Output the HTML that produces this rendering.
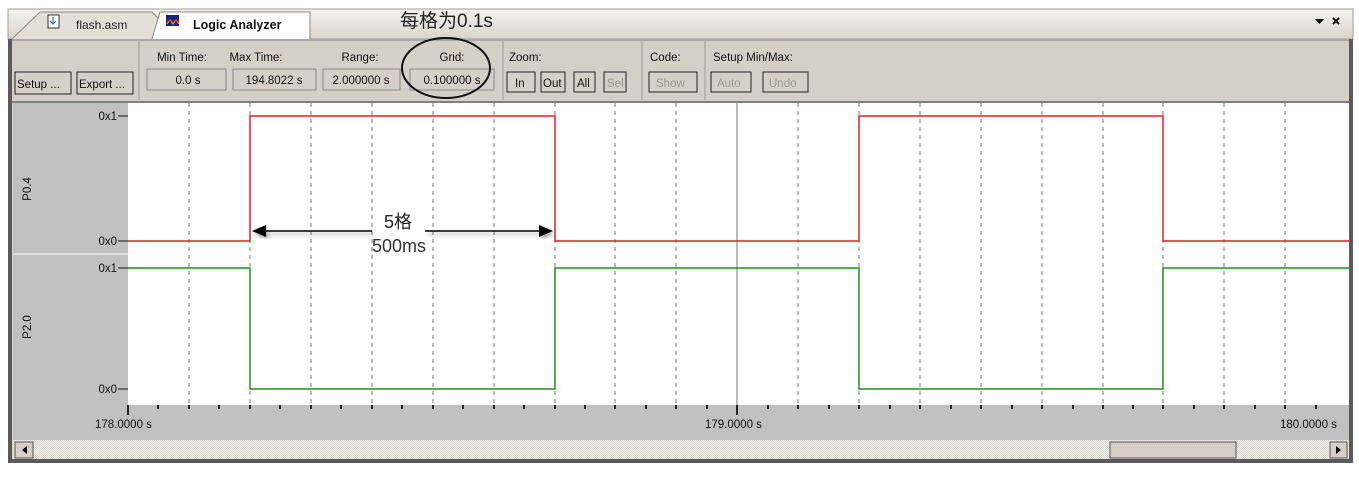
<!DOCTYPE html>
<html><head><meta charset="utf-8"><style>
body{margin:0;width:1359px;height:474px;overflow:hidden;background:#fff;font-family:"Liberation Sans","Noto Sans CJK SC",sans-serif}
svg text{font-family:"Liberation Sans","Noto Sans CJK SC",sans-serif}
</style></head><body>
<svg width="1359" height="474" viewBox="0 0 1359 474" xmlns="http://www.w3.org/2000/svg">
<defs>
<linearGradient id="tb" x1="0" y1="0" x2="0" y2="1"><stop offset="0" stop-color="#f4f3ee"/><stop offset="1" stop-color="#d8d5cc"/></linearGradient>
<pattern id="sc" width="2" height="2" patternUnits="userSpaceOnUse"><rect width="2" height="2" fill="#f2f0ea"/><rect width="1" height="1" fill="#dcd8cf"/><rect x="1" y="1" width="1" height="1" fill="#dcd8cf"/></pattern>
<filter id="sh"><feDropShadow dx="2" dy="3" stdDeviation="2" flood-opacity="0.35"/></filter>
</defs>
<!-- tab bar -->
<rect x="8" y="9" width="1345" height="30" fill="url(#tb)" stroke="#a09c94"/>
<path d="M12 39 L40 12 L152 12 L160 20 L160 39" fill="#e2dfd7" stroke="#8a877f"/>
<rect x="48" y="15" width="11" height="13" fill="#fff" stroke="#333"/>
<path d="M53 17 v6 M50 21 l3 3 l3-3" stroke="#1060c0" fill="none"/>
<text x="76" y="29" font-size="12" fill="#222">flash.asm</text>
<path d="M152 39 L160 12 L310 12 L310 39" fill="#fff" stroke="#8a877f"/>
<rect x="166" y="15" width="13" height="11" fill="#202080"/>
<path d="M167 24 l3-4 l3 4 l3-4 l3 4" stroke="#f0c000" fill="none"/><path d="M167 21 h12" stroke="#e02020"/>
<text x="193" y="29" font-size="12.5" font-weight="bold" fill="#111">Logic Analyzer</text>
<text x="400" y="27" font-size="19" fill="#222">每格为0.1s</text>
<path d="M1315 19 h9 l-4.5 5z" fill="#111"/>
<path d="M1333 18 l6 6 M1339 18 l-6 6" stroke="#111" stroke-width="2"/>
<!-- window frame -->
<rect x="8" y="39" width="1345" height="424" fill="#d4d0c8"/>
<rect x="8" y="39" width="4" height="424" fill="#5a5a5a"/>
<rect x="1349" y="39" width="4" height="424" fill="#5a5a5a"/>
<rect x="8" y="459" width="1345" height="4" fill="#5a5a5a"/>
<line x1="12" y1="40" x2="1349" y2="40" stroke="#808080"/>
<!-- toolbar separators -->
<g stroke="#a09c94"><line x1="139" y1="41" x2="139" y2="100"/><line x1="503" y1="41" x2="503" y2="100"/><line x1="642" y1="41" x2="642" y2="100"/><line x1="705" y1="41" x2="705" y2="100"/></g>
<g font-size="11.5" fill="#111" text-anchor="middle">
<text x="182" y="61">Min Time:</text><text x="256" y="61">Max Time:</text><text x="360" y="61">Range:</text><text x="452" y="61">Grid:</text>
</g>
<g font-size="11.5" fill="#111"><text x="509" y="61">Zoom:</text><text x="650" y="61">Code:</text><text x="713" y="61">Setup Min/Max:</text></g>
<!-- value boxes -->
<g fill="#d4d0c8" stroke="#888"><rect x="147" y="69" width="79" height="21"/><rect x="233" y="69" width="83" height="21"/><rect x="323" y="69" width="77" height="21"/><rect x="410" y="69" width="84" height="21"/></g>
<g font-size="11.5" fill="#111" text-anchor="middle"><text x="188" y="84">0.0 s</text><text x="274" y="84">194.8022 s</text><text x="361" y="84">2.000000 s</text><text x="452" y="84">0.100000 s</text></g>
<!-- buttons -->
<g fill="#d4d0c8" stroke="#222">
<rect x="15" y="72" width="56" height="22"/><rect x="77" y="72" width="56" height="22"/>
<rect x="507" y="72" width="28" height="20"/><rect x="541" y="72" width="24" height="20"/><rect x="574" y="72" width="21" height="20"/><rect x="604" y="72" width="22" height="20"/>
<rect x="649" y="72" width="48" height="20"/><rect x="711" y="72" width="40" height="20"/><rect x="763" y="72" width="45" height="20"/>
</g>
<g font-size="11.5" fill="#111"><text x="17" y="88">Setup ...</text><text x="79" y="88">Export ...</text><text x="515" y="87">In</text><text x="543" y="87">Out</text><text x="577" y="87">All</text></g>
<g font-size="11.5" fill="#9a978f"><text x="607" y="87">Sel</text><text x="656" y="87">Show</text><text x="717" y="87">Auto</text><text x="769" y="87">Undo</text></g>
<ellipse cx="446" cy="68" rx="44" ry="30" fill="none" stroke="#111" stroke-width="2"/>
<!-- plot area -->
<rect x="12" y="101" width="1337" height="2" fill="#808080"/>
<rect x="13" y="103" width="115" height="302" fill="#c0c0c0"/>
<rect x="128" y="103" width="1221" height="302" fill="#fff"/>
<line x1="13" y1="254" x2="128" y2="254" stroke="#fff"/>
<rect x="13" y="405" width="1336" height="35" fill="#c0c0c0"/>
<g stroke="#777" stroke-dasharray="4,4">
<line x1="189" y1="103" x2="189" y2="405"/><line x1="250" y1="103" x2="250" y2="405"/><line x1="311" y1="103" x2="311" y2="405"/><line x1="372" y1="103" x2="372" y2="405"/><line x1="433" y1="103" x2="433" y2="405"/><line x1="494" y1="103" x2="494" y2="405"/><line x1="555" y1="103" x2="555" y2="405"/><line x1="615" y1="103" x2="615" y2="405"/><line x1="676" y1="103" x2="676" y2="405"/>
<line x1="798" y1="103" x2="798" y2="405"/><line x1="859" y1="103" x2="859" y2="405"/><line x1="920" y1="103" x2="920" y2="405"/><line x1="981" y1="103" x2="981" y2="405"/><line x1="1042" y1="103" x2="1042" y2="405"/><line x1="1103" y1="103" x2="1103" y2="405"/><line x1="1163" y1="103" x2="1163" y2="405"/><line x1="1224" y1="103" x2="1224" y2="405"/><line x1="1285" y1="103" x2="1285" y2="405"/>
</g>
<line x1="737" y1="103" x2="737" y2="405" stroke="#777"/>
<g stroke="#222" stroke-width="2">
<path d="M158 405v4M189 405v4M219 405v4M250 405v4M280 405v4M311 405v4M341 405v4M372 405v4M402 405v4M433 405v4M463 405v4M494 405v4M524 405v4M555 405v4M585 405v4M615 405v4M646 405v4M676 405v4M707 405v4M768 405v4M798 405v4M829 405v4M859 405v4M890 405v4M920 405v4M951 405v4M981 405v4M1012 405v4M1042 405v4M1073 405v4M1103 405v4M1133 405v4M1163 405v4M1194 405v4M1224 405v4M1255 405v4M1285 405v4M1316 405v4"/>
<path d="M128 405v10M737 405v10"/>
</g>
<g stroke="#111"><path d="M118 116h10M118 241h10M118 268h10M118 389h10"/></g>
<g font-size="11.5" fill="#111" text-anchor="end"><text x="117" y="120">0x1</text><text x="117" y="245">0x0</text><text x="117" y="272">0x1</text><text x="117" y="393">0x0</text></g>
<text transform="translate(31,189) rotate(-90)" font-size="11.5" fill="#111" text-anchor="middle">P0.4</text>
<text transform="translate(31,327) rotate(-90)" font-size="11.5" fill="#111" text-anchor="middle">P2.0</text>
<path d="M128 241H250V116H555V241H859V116H1163V241H1349" fill="none" stroke="#e02020" stroke-width="1.5"/>
<path d="M128 268H250V389H555V268H859V389H1163V268H1349" fill="none" stroke="#209020" stroke-width="1.5"/>
<g font-size="11.5" fill="#111"><text x="95" y="428">178.0000 s</text><text x="705" y="428">179.0000 s</text><text x="1280" y="428">180.0000 s</text></g>
<!-- annotation -->
<g filter="url(#sh)"><path d="M264 231H372M425 231H540" stroke="#000" stroke-width="1.5"/>
<path d="M252 231l14-6v12z M553 231l-14-6v12z" fill="#000"/></g>
<text x="384" y="228" font-size="18" fill="#222">5格</text>
<text x="372" y="252" font-size="18" fill="#333">500ms</text>
<!-- scrollbar -->
<rect x="13" y="440" width="1336" height="19" fill="url(#sc)"/>
<rect x="15" y="442" width="18" height="16" fill="#d4d0c8" stroke="#555"/><path d="M27 446v8l-5-4z" fill="#000"/>
<rect x="1330" y="442" width="17" height="16" fill="#d4d0c8" stroke="#555"/><path d="M1336 446v8l5-4z" fill="#000"/>
<rect x="1110" y="442" width="126" height="16" fill="#d4d0c8" stroke="#555"/>
</svg>
</body></html>
